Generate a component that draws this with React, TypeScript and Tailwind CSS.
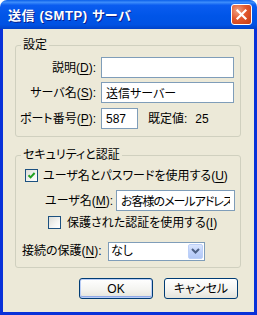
import React from "react";

function TextBox({ value, width, extra }: { value: string; width: string; extra?: string }) {
  return (
    <input
      readOnly
      value={value}
      className={`h-[21px] ${width} border border-[#7f9db9] bg-white px-[4px] text-[12px] text-black outline-none ${extra ?? ""}`}
    />
  );
}

function CheckBox({ checked }: { checked?: boolean }) {
  return (
    <div className="w-[13px] h-[13px] shrink-0 border border-[#1c5180] bg-[linear-gradient(135deg,#dcdcd7_0%,#f5f5f2_60%,#ffffff_100%)] flex items-center justify-center">
      {checked && (
        <svg width="9" height="9" viewBox="0 0 9 9">
          <path d="M1.5 4.2 L3.6 6.4 L7.6 2" fill="none" stroke="#21a121" strokeWidth="2" />
        </svg>
      )}
    </div>
  );
}

function Key({ children }: { children: React.ReactNode }) {
  return <span className="underline underline-offset-[2px] decoration-1">{children}</span>;
}

function GroupBox({ title, children, className }: { title: string; children: React.ReactNode; className?: string }) {
  return (
    <div className={`relative w-[226px] border border-[#d0d0bf] rounded-[3px] ${className ?? ""}`}>
      <span className="absolute left-[5px] -top-[9px] px-[2px] bg-[#ece9d8] leading-[16px]">{title}</span>
      {children}
    </div>
  );
}

function XpButton({ label, isDefault }: { label: string; isDefault?: boolean }) {
  return (
    <button
      className={`h-[21px] w-[74px] rounded-[3px] border border-[#003c74] bg-[linear-gradient(to_bottom,#ffffff_0%,#f4f4f0_55%,#e3e3db_100%)] text-[12px] text-black ${
        isDefault ? "shadow-[inset_0_0_0_1px_#b9cdf6,inset_0_-1px_0_1px_#8fa9e8]" : ""
      }`}
    >
      {label}
    </button>
  );
}

export default function App() {
  return (
    <div className="w-[257px] h-[315px] flex flex-col font-['Liberation_Sans','Noto_Sans_CJK_JP',sans-serif] [font-feature-settings:'palt'] text-[12px] text-black">
      {/* Title bar */}
      <div className="h-[29px] shrink-0 rounded-t-[7px] flex items-center pl-[8px] pr-[5px] bg-[linear-gradient(to_bottom,#0a5fea_0%,#3d8dfb_8%,#0a5cf0_18%,#0055e8_55%,#0052e3_85%,#0042c9_100%)]">
        <span className="pt-[2px] text-white font-bold text-[13px] tracking-[0.6px] [text-shadow:1px_1px_0_#0a1e8c]">
          送信 (SMTP) サーバ
        </span>
        <div className="ml-auto w-[21px] h-[21px] rounded-[3px] border border-white bg-[radial-gradient(circle_at_30%_30%,#f0a283_0%,#e2582e_45%,#c43b12_100%)] flex items-center justify-center">
          <svg width="13" height="13" viewBox="0 0 13 13">
            <path d="M2.5 2.5 L10.5 10.5 M10.5 2.5 L2.5 10.5" stroke="white" strokeWidth="2.2" strokeLinecap="square" />
          </svg>
        </div>
      </div>

      {/* Frame + body */}
      <div className="flex-1 bg-[#0831d9] px-[3px] pb-[3px]">
        <div className="h-full bg-[#ece9d8] pl-[12px] flex flex-col">
          <GroupBox title="設定" className="mt-[16px] pt-[11px] pb-[7px]">
            <div className="flex items-center h-[21px]">
              <span className="w-[81px] text-right pr-[1px]">
                説明(<Key>D</Key>):
              </span>
              <div className="ml-[4px]">
                <TextBox value="" width="w-[133px]" />
              </div>
            </div>
            <div className="flex items-center h-[21px] mt-[4px]">
              <span className="w-[81px] text-right pr-[1px]">
                サーバ名(<Key>S</Key>):
              </span>
              <div className="ml-[4px]">
                <TextBox value="送信サーバー" width="w-[133px]" />
              </div>
            </div>
            <div className="flex items-center h-[21px] mt-[5px]">
              <span className="w-[81px] text-right pr-[1px]">
                ポート番号(<Key>P</Key>):
              </span>
              <div className="ml-[4px]">
                <TextBox value="587" width="w-[37px]" />
              </div>
              <span className="ml-[10px]">既定値:</span>
              <span className="ml-[8px]">25</span>
            </div>
          </GroupBox>

          <GroupBox title="セキュリティと認証" className="mt-[18px] pt-[13px] pb-[7px]">
            <div className="flex items-center h-[13px] pl-[9px]">
              <CheckBox checked />
              <span className="ml-[5px]">
                ユーザ名とパスワードを使用する(<Key>U</Key>)
              </span>
            </div>
            <div className="flex items-center h-[21px] mt-[8px] pl-[29px]">
              <span className="w-[71px]">
                ユーザ名(<Key>M</Key>):
              </span>
              <TextBox value="お客様のメールアドレス" width="w-[119px]" extra="px-[3px] tracking-[-1px]" />
            </div>
            <div className="flex items-center h-[13px] mt-[5px] pl-[32px]">
              <CheckBox />
              <span className="ml-[6px]">
                保護された認証を使用する(<Key>I</Key>)
              </span>
            </div>
            <div className="flex items-center h-[18px] mt-[13px] pl-[6px]">
              <span className="w-[86px]">
                接続の保護(<Key>N</Key>):
              </span>
              <div className="w-[97px] h-[19px] border border-[#7f9db9] bg-white flex items-center pl-[2px] pr-[1px]">
                <span className="flex-1">なし</span>
                <div className="w-[15px] h-[15px] rounded-[2px] border border-[#bcd0f8] bg-[linear-gradient(to_bottom,#dbe6fd_0%,#c1d3fb_50%,#b2c8f6_100%)] flex items-center justify-center">
                  <svg width="9" height="6" viewBox="0 0 9 6">
                    <path d="M1 1 L4.5 4.5 L8 1" fill="none" stroke="#4d6185" strokeWidth="2" />
                  </svg>
                </div>
              </div>
            </div>
          </GroupBox>

          <div className="flex justify-end gap-[11px] mt-[10px] pr-[16px]">
            <XpButton label="OK" isDefault />
            <XpButton label="キャンセル" />
          </div>
        </div>
      </div>
    </div>
  );
}
